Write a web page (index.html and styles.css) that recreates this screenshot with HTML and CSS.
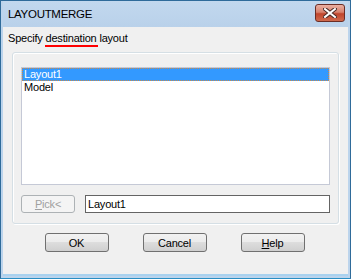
FILE: index.html
```html
<!DOCTYPE html>
<html lang="en">
<head>
  <meta charset="UTF-8">
  <title>LAYOUTMERGE</title>
  <link rel="stylesheet" href="styles.css">
</head>
<body>

  <!-- Dialog window -->
  <div class="window">
    <div class="titlebar">
      <span class="title">LAYOUTMERGE</span>
      <span class="close">
        <svg width="14" height="10" viewBox="0 0 14 10">
          <path d="M2 1 L12 9 M12 1 L2 9" stroke="#4a2a26" stroke-width="4" stroke-linecap="square"/>
          <path d="M2 1 L12 9 M12 1 L2 9" stroke="#ffffff" stroke-width="2" stroke-linecap="square"/>
        </svg>
      </span>
    </div>

    <div class="client">
      <div class="prompt">Specify <span class="mark">destination</span> layout</div>

      <div class="group">
        <div class="listbox">
          <div class="item selected">Layout1</div>
          <div class="item">Model</div>
        </div>

        <div class="pickrow">
          <span class="btn disabled"><u>P</u>ick&lt;</span>
          <div class="field">Layout1</div>
        </div>
      </div>

      <div class="buttons">
        <span class="btn">OK</span>
        <span class="btn">Cancel</span>
        <span class="btn"><u>H</u>elp</span>
      </div>
    </div>
  </div>

</body>
</html>
```

FILE: styles.css
```css
body {
  margin: 0;
  font-family: "Liberation Sans", Arial, sans-serif;
  font-size: 11px;
  letter-spacing: -0.2px;
  background-color: #ffffff;
}

.window {
  width: 351px;
  height: 279px;
  box-sizing: border-box;
  border: 1px solid #2f6b9a;
  border-bottom-color: #2a8fc4;
  background-color: #bcd4ec;
  padding: 0 2px 2px 2px;
  display: flex;
  flex-direction: column;
}

.titlebar {
  height: 26px;
  display: flex;
  align-items: flex-start;
  justify-content: space-between;
  background: linear-gradient(#c2d8ee, #b9d1ea);
}

.title {
  font-size: 11.5px;
  letter-spacing: -0.3px;
  color: #000;
  margin: 7px 0 0 5px;
}

.close {
  width: 28px;
  height: 16px;
  margin: 3px 3px 0 0;
  border: 1px solid #6b2d25;
  border-radius: 3px;
  background: linear-gradient(#eab0a2, #d7826e 45%, #c0452c 55%, #cf6a4e);
  display: flex;
  align-items: center;
  justify-content: center;
}

.client {
  flex: 1;
  background-color: #f0f0f0;
  border-bottom: 2px solid #a9d2ef;
  display: flex;
  flex-direction: column;
}

.prompt {
  margin: 5px 0 0 5px;
  height: 15px;
  line-height: 13px;
  color: #000;
}

.mark {
  display: inline-block;
  border-bottom: 2px solid #ff0000;
  padding: 0 1px;
  margin: 0 -1px;
  line-height: 13px;
}

.group {
  margin: 5px 9px 0 9px;
  height: 172px;
  box-sizing: border-box;
  border: 1px solid #d5dfe5;
  box-shadow: inset 1px 1px 0 #ffffff, 1px 1px 0 #ffffff;
  border-radius: 3px;
  padding: 14px 8px 0 8px;
}

.listbox {
  height: 118px;
  box-sizing: border-box;
  border: 1px solid #c5c9d6;
  background-color: #ffffff;
}

.item {
  height: 13px;
  line-height: 13px;
  padding-left: 2px;
  color: #000;
}

.selected {
  background-color: #3399ff;
  color: #ffffff;
  outline: 1px dotted #c98a4a;
  outline-offset: -1px;
}

.pickrow {
  display: flex;
  margin-top: 10px;
  gap: 10px;
}

.btn {
  display: inline-flex;
  align-items: center;
  justify-content: center;
  width: 64px;
  height: 19px;
  box-sizing: border-box;
  border: 1px solid #707070;
  border-radius: 3px;
  background: linear-gradient(#f2f2f2, #ebebeb 50%, #dddddd 50%, #cfcfcf);
  color: #000;
}

.btn.disabled {
  width: 54px;
  height: 18px;
  border-color: #adb2b5;
  background: #f4f4f4;
  color: #a0a0a0;
}

.field {
  flex: 1;
  height: 18px;
  box-sizing: border-box;
  border: 1px solid #646464;
  background-color: #ffffff;
  padding-left: 2px;
  line-height: 16px;
  color: #000;
}

.buttons {
  display: flex;
  justify-content: center;
  gap: 34px;
  margin-top: 9px;
  padding-right: 2px;
}
```
